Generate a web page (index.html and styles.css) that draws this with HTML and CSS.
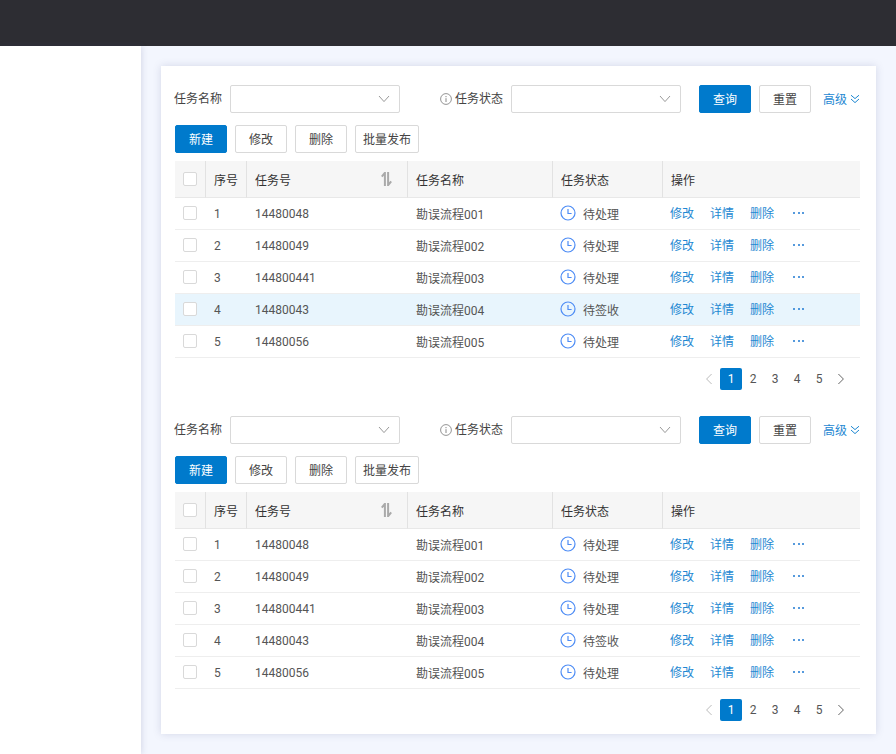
FILE: index.html
```html
<!DOCTYPE html>
<html lang="zh-CN">
<head>
<meta charset="utf-8">
<title>任务列表</title>
<link rel="stylesheet" href="styles.css">
</head>
<body>
<svg class="defs" width="0" height="0" aria-hidden="true">
  <symbol id="chev" viewBox="0 0 12 8"><path d="M1 1 6 6.6 11 1" fill="none" stroke="currentColor" stroke-width="1"/></symbol>
  <symbol id="clock" viewBox="0 0 16 16"><circle cx="8" cy="8" r="7" fill="none" stroke="currentColor" stroke-width="1.2"/><path d="M8 4V8.5H11.6" fill="none" stroke="currentColor" stroke-width="1.2"/></symbol>
  <symbol id="info" viewBox="0 0 12 12"><circle cx="6" cy="6" r="5.4" fill="none" stroke="currentColor" stroke-width=".9"/><path d="M6 5.2V9M6 3V4.2" fill="none" stroke="currentColor" stroke-width="1"/></symbol>
  <symbol id="sort" viewBox="0 0 11 14"><path d="M3.9 14V0.8L0.8 4.6M7.1 0V13.2L10.2 9.4" fill="none" stroke="currentColor" stroke-width="2"/></symbol>
  <symbol id="dbl" viewBox="0 0 10 10"><path d="M1 1.2 5 4.6 9 1.2M1 5 5 8.6 9 5" fill="none" stroke="currentColor" stroke-width="1"/></symbol>
  <symbol id="left" viewBox="0 0 8 12"><path d="M6.6 1 1.6 6 6.6 11" fill="none" stroke="currentColor" stroke-width="1"/></symbol>
  <symbol id="right" viewBox="0 0 8 12"><path d="M1.4 1 6.4 6 1.4 11" fill="none" stroke="currentColor" stroke-width="1"/></symbol>
</svg>
<header class="topbar"></header>
<div class="layout">
  <aside class="sidebar"></aside>
  <main class="main">
    <div class="card" id="card"></div>
  </main>
</div>
<template id="section">
  <section class="section">
    <form class="filters">
      <div class="field"><span class="label">任务名称</span><div class="select"><svg class="chev"><use href="#chev"/></svg></div></div>
      <div class="field second"><svg class="info"><use href="#info"/></svg><span class="label">任务状态</span><div class="select"><svg class="chev"><use href="#chev"/></svg></div></div>
      <button type="button" class="btn primary query">查询</button>
      <button type="button" class="btn">重置</button>
      <a class="advanced">高级<svg class="dbl"><use href="#dbl"/></svg></a>
    </form>
    <div class="toolbar">
      <button type="button" class="btn primary">新建</button>
      <button type="button" class="btn">修改</button>
      <button type="button" class="btn">删除</button>
      <button type="button" class="btn wide">批量发布</button>
    </div>
    <table class="grid">
      <colgroup><col class="c1"><col class="c2"><col class="c3"><col class="c4"><col class="c5"><col class="c6"></colgroup>
      <thead><tr>
        <th><span class="check"></span></th><th>序号</th>
        <th><div class="sorthead">任务号<svg class="sort"><use href="#sort"/></svg></div></th>
        <th>任务名称</th><th>任务状态</th><th>操作</th>
      </tr></thead>
      <tbody></tbody>
    </table>
    <nav class="pager">
      <svg class="arrow muted"><use href="#left"/></svg>
      <span class="page current">1</span><span class="page">2</span><span class="page">3</span><span class="page">4</span><span class="page">5</span>
      <svg class="arrow"><use href="#right"/></svg>
    </nav>
  </section>
</template>
<script src="app.js"></script>
</body>
</html>
```
FILE: styles.css
```css
* { box-sizing: border-box; }
html, body { margin: 0; height: 100%; }
body {
  width: 896px; height: 754px; overflow: hidden;
  background: #f3f6fe;
  font-family: Roboto, "Noto Sans CJK SC", sans-serif;
  font-size: 12px; color: #444;
}
.defs { position: absolute; }
.topbar { height: 46px; background: #2d2d33; }
.layout { display: flex; height: 708px; }
.sidebar { width: 141px; background: #fff; box-shadow: 1px 0 6px rgba(60,70,120,.16); }
.main { flex: 1; padding: 20px; }
.card {
  width: 715px; height: 668px; background: #fff;
  padding: 19px 16px 0 13px;
  box-shadow: 0 0 8px rgba(70,80,130,.18);
}
.section { height: 331px; }
.filters { display: flex; align-items: center; height: 28px; }
.field { display: flex; align-items: center; }
.second { margin-left: 40px; }
.label { margin-right: 8px; color: #444; line-height: 28px; }
.select {
  width: 170px; height: 28px; border: 1px solid #d9d9d9; border-radius: 2px;
  display: flex; align-items: center; justify-content: flex-end; padding-right: 9px;
}
.chev { width: 12px; height: 8px; color: #999; }
.info { width: 12px; height: 12px; color: #888; margin-right: 3px; }
.btn {
  width: 52px; height: 28px; padding: 0 0 2px; border: 1px solid #d9d9d9; border-radius: 2px;
  background: #fff; color: #444; font: inherit; margin-right: 8px;
}
.btn.primary { background: #007acc; border-color: #007acc; color: #fff; }
.btn.wide { width: 64px; }
.query { margin-left: 18px; }
.advanced { margin-left: 4px; padding-bottom: 2px; color: #1e88d2; display: flex; align-items: center; white-space: nowrap; }
.dbl { width: 10px; height: 10px; margin: 2px 0 0 3px; color: #1e88d2; }
.toolbar { display: flex; margin: 12px 0 8px 1px; }
.grid { width: 685px; margin-left: 1px; border-collapse: separate; border-spacing: 0; table-layout: fixed; }
.c1 { width: 30px; } .c2 { width: 41px; } .c3 { width: 161px; }
.c4 { width: 145px; } .c5 { width: 110px; } .c6 { width: 198px; }
th {
  height: 37px; padding: 0 8px; background: #f6f6f6; text-align: left;
  font-weight: 400; color: #333; border-bottom: 1px solid #e8e8e8;
  border-left: 1px solid #e2e2e2;
}
th:first-child, td:first-child { border-left: 0; padding: 0 0 0 8px; }
td { height: 32px; padding: 0 8px 0 9px; border-bottom: 1px solid #eee; color: #555; white-space: nowrap; }
td .check { margin-top: -1px; }
tr.active td { background: #e8f5fd; }
.check { display: block; width: 14px; height: 14px; border: 1px solid #d9d9d9; border-radius: 2px; background: #fff; }
.sorthead { display: flex; align-items: center; justify-content: space-between; padding-right: 7px; }
.sort { width: 11px; height: 14px; color: #aaa; }
.status { display: flex; align-items: center; }
.clock { width: 16px; height: 16px; color: #4d8cf5; margin: -1px 7px 0 -1px; }
.ops { display: flex; align-items: center; margin: -2px 0 0 -1px; }
.ops a { color: #1e88d2; margin-right: 16px; }
.more { width: 11px; display: flex; justify-content: space-between; margin-left: 3px; }
.more i { display: block; width: 2px; height: 2px; border-radius: 50%; background: #1e78d2; }
.pager { display: flex; align-items: center; justify-content: flex-end; margin-top: 10px; width: 686px; height: 22px; padding-right: 15px; }
.page { width: 22px; height: 22px; line-height: 22px; text-align: center; color: #555; }
.page.current { background: #007acc; color: #fff; border-radius: 2px; }
.arrow { width: 8px; height: 12px; color: #666; margin-left: 7px; }
.arrow.muted { color: #bbb; margin: 0 7px 0 0; }
```
FILE: app.js
```js
const rows = [
  ["1", "14480048", "勘误流程001", "待处理"],
  ["2", "14480049", "勘误流程002", "待处理"],
  ["3", "144800441", "勘误流程003", "待处理"],
  ["4", "14480043", "勘误流程004", "待签收"],
  ["5", "14480056", "勘误流程005", "待处理"]
];
const card = document.getElementById("card");
const tpl = document.getElementById("section");
[3, -1].forEach((active) => {
  const node = tpl.content.cloneNode(true);
  const body = node.querySelector("tbody");
  rows.forEach((r, i) => {
    const tr = document.createElement("tr");
    if (i === active) tr.className = "active";
    tr.innerHTML =
      '<td><span class="check"></span></td><td>' + r[0] + "</td><td>" + r[1] + "</td><td>" + r[2] + "</td>" +
      '<td><div class="status"><svg class="clock"><use href="#clock"/></svg>' + r[3] + "</div></td>" +
      '<td><div class="ops"><a>修改</a><a>详情</a><a>删除</a><span class="more"><i></i><i></i><i></i></span></div></td>';
    body.appendChild(tr);
  });
  card.appendChild(node);
});
```
